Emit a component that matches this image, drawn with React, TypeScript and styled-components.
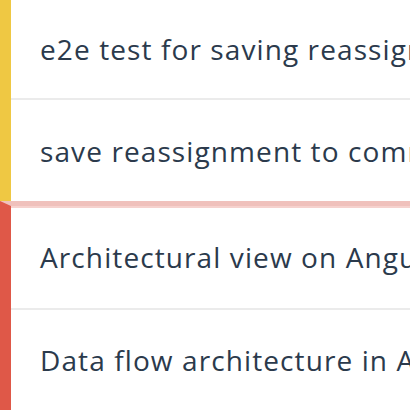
import React from "react";
import styled, { createGlobalStyle } from "styled-components";

const Global = createGlobalStyle`
  html, body { margin: 0; padding: 0; background: #fff; }
  body { font-family: "Open Sans", "Lato", sans-serif; overflow: hidden; }
`;

const List = styled.div`
  display: flex;
  flex-direction: column;
  width: 410px;
  height: 410px;
  overflow: hidden;
`;

const Group = styled.div<{ $color: string; $topBorder?: boolean }>`
  display: flex;
  flex-direction: column;
  border-left: 11px solid ${(p) => p.$color};
  ${(p) =>
    p.$topBorder
      ? `box-shadow: inset 0 2px 0 #f6d2ce; border-top: 5px solid #f0c1bc;`
      : ""}
`;

const Row = styled.div<{ $divider?: boolean; $h: number }>`
  height: ${(p) => p.$h}px;
  display: flex;
  align-items: center;
  padding-left: 29px;
  white-space: nowrap;
  overflow: hidden;
  font-size: 28px;
  letter-spacing: 1.1px;
  color: #2b3a4c;
  ${(p) => (p.$divider ? "border-bottom: 2px solid #ebebeb;" : "")}
`;

export default function App() {
  return (
    <>
      <Global />
      <List>
        <Group $color="#efc843">
          <Row $divider $h={98}>e2e test for saving reassignment</Row>
          <Row $h={101}>save reassignment to commit</Row>
        </Group>
        <Group $color="#df5848" $topBorder>
          <Row $divider $h={102}>Architectural view on Angular</Row>
          <Row $h={100}>Data flow architecture in Angular</Row>
        </Group>
      </List>
    </>
  );
}
